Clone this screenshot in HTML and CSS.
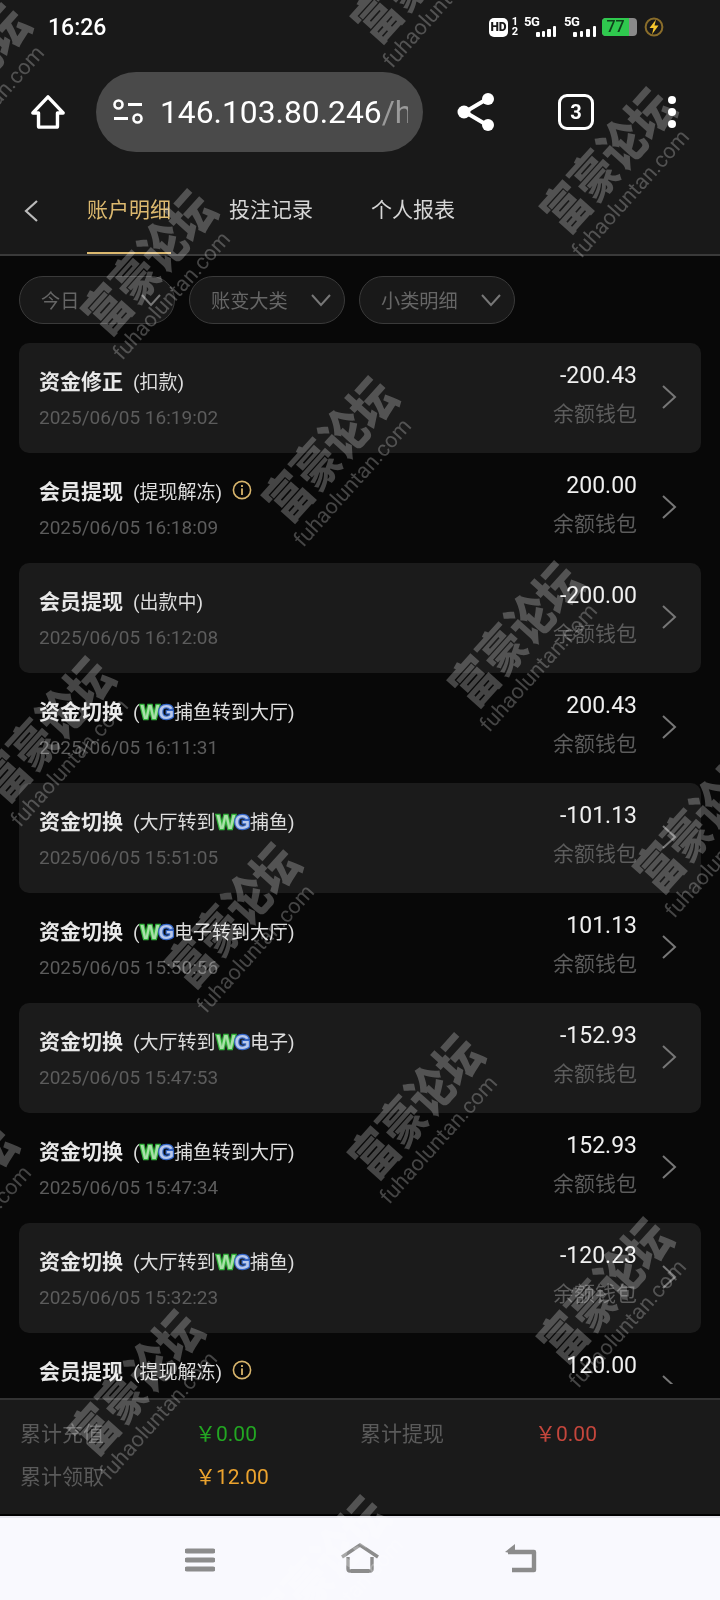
FILE: index.html
```html
<!DOCTYPE html>
<html lang="zh-CN">
<head>
  <meta charset="UTF-8">
  <meta name="viewport" content="width=device-width, initial-scale=1.0">
  <title>账户明细</title>
  <link rel="stylesheet" href="styles.css">
</head>
<body>
  <svg class="sprite" width="0" height="0">
    <symbol id="chev-right" viewBox="0 0 16 26"><path d="M2 2l12 11L2 24" fill="none" stroke="#777" stroke-width="2"/></symbol>
    <symbol id="chev-down" viewBox="0 0 22 14"><path d="M2 2l9 10 9-10" fill="none" stroke="#777" stroke-width="2"/></symbol>
    <symbol id="info" viewBox="0 0 20 20"><circle cx="10" cy="10" r="8.6" fill="none" stroke="#d8b56c" stroke-width="1.6"/><rect x="9.1" y="8.4" width="1.8" height="6.6" fill="#d8b56c"/><rect x="9.1" y="5" width="1.8" height="2" fill="#d8b56c"/></symbol>
  </svg>

  <div class="page">
    <header class="top">
      <div class="status">
        <span class="time">16:26</span>
        <div class="status-icons">
          <span class="hd">HD</span>
          <span class="sim"><i>1</i><i>2</i></span>
          <div class="net">
            <span class="net-label">5G</span>
            <span class="bars"><b class="b1"></b><b class="b2"></b><b class="b3"></b><b class="b4"></b></span>
          </div>
          <div class="net net-second">
            <span class="net-label">5G</span>
            <span class="bars"><b class="b1"></b><b class="b2"></b><b class="b3"></b><b class="b4"></b></span>
          </div>
          <div class="battery"><span class="battery-fill">77</span></div>
          <svg class="bolt" viewBox="0 0 20 20"><circle cx="10" cy="10" r="8.4" fill="none" stroke="#8a6d2a" stroke-width="2"/><path d="M12 2.5L5.5 11H9.5L8 17.5 14.5 8.5H10.5z" fill="#f4c52e"/></svg>
        </div>
      </div>

      <div class="browser">
        <svg class="home-icon" viewBox="0 0 38 38"><path d="M19 3L3 20h6v14a1 1 0 0 0 1 1h18a1 1 0 0 0 1-1V20h6z" fill="none" stroke="#fff" stroke-width="3.6" stroke-linejoin="round"/></svg>
        <div class="url">
          <svg class="url-icon" viewBox="0 0 30 26"><circle cx="5.5" cy="5.5" r="4" fill="none" stroke="#fff" stroke-width="2.6"/><path d="M15 5.5h14M1 19.5h14" stroke="#fff" stroke-width="2.8"/><circle cx="24.5" cy="19.5" r="4" fill="none" stroke="#fff" stroke-width="2.6"/></svg>
          <span class="url-text">146.103.80.246<em>/h</em></span>
        </div>
        <svg class="share-icon" viewBox="0 0 38 40"><path d="M30 7L8 20l22 13" fill="none" stroke="#fff" stroke-width="4"/><circle cx="31" cy="7" r="6" fill="#fff"/><circle cx="7" cy="20" r="6.5" fill="#fff"/><circle cx="31" cy="33" r="6" fill="#fff"/></svg>
        <span class="tab-count">3</span>
        <div class="dots"><i></i><i></i><i></i></div>
      </div>

      <nav class="tabs">
        <svg class="back" viewBox="0 0 16 24"><path d="M14 2L3 12l11 10" fill="none" stroke="#bbb" stroke-width="2.2"/></svg>
        <a class="tab active">账户明细</a>
        <a class="tab">投注记录</a>
        <a class="tab">个人报表</a>
      </nav>
    </header>

    <div class="filters">
      <div class="pill">今日<svg class="pill-arrow"><use href="#chev-down"/></svg></div>
      <div class="pill">账变大类<svg class="pill-arrow"><use href="#chev-down"/></svg></div>
      <div class="pill">小类明细<svg class="pill-arrow"><use href="#chev-down"/></svg></div>
    </div>

    <main class="list">
      <div class="row card">
        <div class="row-main">
          <div class="row-title"><strong>资金修正</strong><span>(扣款)</span></div>
          <div class="row-date">2025/06/05 16:19:02</div>
        </div>
        <div class="row-money"><div class="amount">-200.43</div><div class="wallet">余额钱包</div></div>
        <svg class="arrow"><use href="#chev-right"/></svg>
      </div>
      <div class="row">
        <div class="row-main">
          <div class="row-title"><strong>会员提现</strong><span>(提现解冻)</span><svg class="info"><use href="#info"/></svg></div>
          <div class="row-date">2025/06/05 16:18:09</div>
        </div>
        <div class="row-money"><div class="amount">200.00</div><div class="wallet">余额钱包</div></div>
        <svg class="arrow"><use href="#chev-right"/></svg>
      </div>
      <div class="row card">
        <div class="row-main">
          <div class="row-title"><strong>会员提现</strong><span>(出款中)</span></div>
          <div class="row-date">2025/06/05 16:12:08</div>
        </div>
        <div class="row-money"><div class="amount">-200.00</div><div class="wallet">余额钱包</div></div>
        <svg class="arrow"><use href="#chev-right"/></svg>
      </div>
      <div class="row">
        <div class="row-main">
          <div class="row-title"><strong>资金切换</strong><span>(<span class="wg"><u>W</u><s>G</s></span>捕鱼转到大厅)</span></div>
          <div class="row-date">2025/06/05 16:11:31</div>
        </div>
        <div class="row-money"><div class="amount">200.43</div><div class="wallet">余额钱包</div></div>
        <svg class="arrow"><use href="#chev-right"/></svg>
      </div>
      <div class="row card">
        <div class="row-main">
          <div class="row-title"><strong>资金切换</strong><span>(大厅转到<span class="wg"><u>W</u><s>G</s></span>捕鱼)</span></div>
          <div class="row-date">2025/06/05 15:51:05</div>
        </div>
        <div class="row-money"><div class="amount">-101.13</div><div class="wallet">余额钱包</div></div>
        <svg class="arrow"><use href="#chev-right"/></svg>
      </div>
      <div class="row">
        <div class="row-main">
          <div class="row-title"><strong>资金切换</strong><span>(<span class="wg"><u>W</u><s>G</s></span>电子转到大厅)</span></div>
          <div class="row-date">2025/06/05 15:50:56</div>
        </div>
        <div class="row-money"><div class="amount">101.13</div><div class="wallet">余额钱包</div></div>
        <svg class="arrow"><use href="#chev-right"/></svg>
      </div>
      <div class="row card">
        <div class="row-main">
          <div class="row-title"><strong>资金切换</strong><span>(大厅转到<span class="wg"><u>W</u><s>G</s></span>电子)</span></div>
          <div class="row-date">2025/06/05 15:47:53</div>
        </div>
        <div class="row-money"><div class="amount">-152.93</div><div class="wallet">余额钱包</div></div>
        <svg class="arrow"><use href="#chev-right"/></svg>
      </div>
      <div class="row">
        <div class="row-main">
          <div class="row-title"><strong>资金切换</strong><span>(<span class="wg"><u>W</u><s>G</s></span>捕鱼转到大厅)</span></div>
          <div class="row-date">2025/06/05 15:47:34</div>
        </div>
        <div class="row-money"><div class="amount">152.93</div><div class="wallet">余额钱包</div></div>
        <svg class="arrow"><use href="#chev-right"/></svg>
      </div>
      <div class="row card">
        <div class="row-main">
          <div class="row-title"><strong>资金切换</strong><span>(大厅转到<span class="wg"><u>W</u><s>G</s></span>捕鱼)</span></div>
          <div class="row-date">2025/06/05 15:32:23</div>
        </div>
        <div class="row-money"><div class="amount">-120.23</div><div class="wallet">余额钱包</div></div>
        <svg class="arrow"><use href="#chev-right"/></svg>
      </div>
      <div class="row">
        <div class="row-main">
          <div class="row-title"><strong>会员提现</strong><span>(提现解冻)</span><svg class="info"><use href="#info"/></svg></div>
        </div>
        <div class="row-money"><div class="amount">120.00</div></div>
        <svg class="arrow"><use href="#chev-right"/></svg>
      </div>
    </main>

    <footer class="totals">
      <div class="total"><span class="total-label">累计充值</span><span class="total-value green">￥0.00</span></div>
      <div class="total"><span class="total-label">累计提现</span><span class="total-value red">￥0.00</span></div>
      <div class="total"><span class="total-label">累计领取</span><span class="total-value orange">￥12.00</span></div>
    </footer>

    <div class="navbar">
      <svg class="nav-icon" viewBox="0 0 30 24"><path d="M2 3h26M2 12h26M2 21h26" stroke="#8c8c8c" stroke-width="5" stroke-linecap="round"/></svg>
      <svg class="nav-icon nav-home" viewBox="0 0 40 30"><path d="M2 14L20 2l18 12" fill="none" stroke="#8c8c8c" stroke-width="3.4"/><path d="M8 14v12a2 2 0 0 0 2 2h20a2 2 0 0 0 2-2V14" fill="none" stroke="#8c8c8c" stroke-width="3.4"/><path d="M11 28h18" stroke="#8c8c8c" stroke-width="4"/></svg>
      <svg class="nav-icon nav-back" viewBox="0 0 34 30"><path d="M4 9h26v18H8" fill="none" stroke="#8c8c8c" stroke-width="4.4" stroke-linejoin="round"/><path d="M1 9l10-8v10z" fill="#8c8c8c"/></svg>
    </div>

    <div class="marks">
      <div class="mark m1"><b>富豪论坛</b><span>fuhaoluntan.com</span></div>
      <div class="mark m2"><b>富豪论坛</b><span>fuhaoluntan.com</span></div>
      <div class="mark m3"><b>富豪论坛</b><span>fuhaoluntan.com</span></div>
      <div class="mark m4"><b>富豪论坛</b><span>fuhaoluntan.com</span></div>
      <div class="mark m5"><b>富豪论坛</b><span>fuhaoluntan.com</span></div>
      <div class="mark m6"><b>富豪论坛</b><span>fuhaoluntan.com</span></div>
      <div class="mark m7"><b>富豪论坛</b><span>fuhaoluntan.com</span></div>
      <div class="mark m8"><b>富豪论坛</b><span>fuhaoluntan.com</span></div>
      <div class="mark m9"><b>富豪论坛</b><span>fuhaoluntan.com</span></div>
      <div class="mark m10"><b>富豪论坛</b><span>fuhaoluntan.com</span></div>
      <div class="mark m11"><b>富豪论坛</b><span>fuhaoluntan.com</span></div>
      <div class="mark m12"><b>富豪论坛</b><span>fuhaoluntan.com</span></div>
      <div class="mark m13"><b>富豪论坛</b><span>fuhaoluntan.com</span></div>
      <div class="mark m14"><b>富豪论坛</b><span>fuhaoluntan.com</span></div>
    </div>
  </div>
</body>
</html>
```

FILE: styles.css
```css
* {
  box-sizing: border-box;
}

body {
  margin: 0;
  background-color: #080808;
  font-family: Roboto, "Noto Sans CJK SC", sans-serif;
}

.sprite {
  position: absolute;
}

.page {
  position: relative;
  width: 720px;
  height: 1600px;
  display: flex;
  flex-direction: column;
  overflow: hidden;
  background-color: #080808;
}

/* top area */
.top {
  height: 256px;
  flex: none;
  background-color: #191919;
  border-bottom: 2px solid #3a3a3a;
}

.status {
  height: 56px;
  display: flex;
  align-items: center;
  justify-content: space-between;
  padding: 0 56px 2px 48px;
}

.time {
  color: #fff;
  font-size: 23px;
  font-weight: 500;
}

.status-icons {
  display: flex;
  align-items: center;
  color: #fff;
}

.hd {
  width: 19px;
  height: 19px;
  border-radius: 5px;
  background-color: #fff;
  color: #191919;
  font-size: 12px;
  font-weight: 900;
  line-height: 19px;
  text-align: center;
}

.sim {
  width: 14px;
  display: flex;
  flex-direction: column;
  align-items: center;
  font-size: 11px;
  font-weight: 700;
  line-height: 10px;
}

.sim i {
  font-style: normal;
}

.net {
  width: 32px;
  height: 20px;
  margin-left: 2px;
  position: relative;
}

.net-second {
  margin-left: 8px;
}

.net-label {
  position: absolute;
  left: 0;
  top: -3px;
  font-size: 13px;
  font-weight: 700;
  letter-spacing: -0.5px;
}

.bars {
  position: absolute;
  right: 0;
  bottom: 0;
  display: flex;
  align-items: flex-end;
  gap: 2px;
}

.net-second .bars {
  gap: 3px;
}

.bars b {
  width: 3.5px;
  background-color: #fff;
  border-radius: 1px;
}

.b1 { height: 5px; }
.b2 { height: 6px; }
.b3 { height: 8px; }
.b4 { height: 11px; }

.battery {
  width: 35px;
  height: 18px;
  margin-left: 6px;
  background-color: #8a8a8a;
  border-radius: 4px;
  overflow: hidden;
}

.battery-fill {
  display: block;
  width: 27px;
  height: 18px;
  background-color: #2fc94e;
  color: #10401c;
  font-size: 16px;
  font-weight: 500;
  line-height: 18px;
  text-align: center;
}

.bolt {
  width: 20px;
  height: 20px;
  margin-left: 7px;
}

/* browser bar */
.browser {
  height: 80px;
  margin-top: 16px;
  display: flex;
  align-items: center;
  padding-left: 30px;
}

.home-icon {
  width: 36px;
  height: 38px;
  flex: none;
}

.url {
  width: 327px;
  height: 80px;
  margin-left: 30px;
  flex: none;
  display: flex;
  align-items: center;
  padding: 0 15px 0 17px;
  background-color: #4a4a4a;
  border-radius: 40px;
  overflow: hidden;
}

.url-icon {
  width: 30px;
  height: 26px;
  flex: none;
}

.url-text {
  margin-left: 17px;
  color: #fff;
  font-size: 31.8px;
  white-space: nowrap;
  overflow: hidden;
}

.url-text em {
  font-style: normal;
  color: #9a9a9a;
}

.share-icon {
  width: 38px;
  height: 40px;
  margin-left: 34px;
  flex: none;
}

.tab-count {
  width: 36px;
  height: 36px;
  margin-left: 63px;
  flex: none;
  border: 3px solid #fff;
  border-radius: 9px;
  color: #fff;
  font-size: 20px;
  font-weight: 700;
  line-height: 30px;
  text-align: center;
}

.dots {
  margin-left: 74px;
  display: flex;
  flex-direction: column;
  gap: 4px;
}

.dots i {
  width: 8px;
  height: 8px;
  border-radius: 50%;
  background-color: #fff;
}

/* tabs */
.tabs {
  height: 102px;
  padding-top: 28px;
  display: flex;
  align-items: flex-start;
  position: relative;
  padding-left: 87px;
}

.back {
  position: absolute;
  left: 23px;
  top: 47px;
  width: 16px;
  height: 24px;
}

.tab {
  width: 84px;
  height: 74px;
  margin-right: 58px;
  color: #d6d6d6;
  font-size: 21px;
  line-height: 60px;
  white-space: nowrap;
}

.tab.active {
  color: #dcb96f;
  border-bottom: 2px solid #dcb96f;
}

/* filters */
.filters {
  height: 87px;
  flex: none;
  display: flex;
  gap: 14px;
  padding: 20px 0 0 19px;
}

.pill {
  width: 156px;
  height: 48px;
  display: flex;
  align-items: center;
  justify-content: space-between;
  padding: 0 12px 0 21px;
  background-color: #191919;
  border: 1.5px solid #3a3a3a;
  border-radius: 24px;
  color: #666;
  font-size: 19.2px;
}

.pill-arrow {
  width: 22px;
  height: 14px;
}

/* list */
.list {
  flex: none;
  height: 1041px;
  overflow: hidden;
  padding: 0 19px;
}

.row {
  height: 110px;
  display: flex;
  border-radius: 10px;
}

.row.card {
  background-color: #1b1b1b;
}

.row-main {
  flex: 1;
  padding: 23px 0 0 20px;
}

.row-title {
  height: 28px;
  display: flex;
  align-items: center;
  color: #ddd;
  font-size: 19px;
  white-space: nowrap;
}

.row-title strong {
  margin-right: 10px;
  color: #e8e8e8;
  font-size: 21px;
  font-weight: 700;
}

.row-date {
  margin-top: 11px;
  color: #5c5c5c;
  font-size: 19px;
  line-height: 26px;
}

.row-money {
  padding-top: 19px;
  text-align: right;
}

.amount {
  color: #f0f0f0;
  font-size: 23px;
  line-height: 28px;
}

.wallet {
  margin-top: 10px;
  color: #5c5c5c;
  font-size: 21px;
  line-height: 28px;
}

.arrow {
  width: 16px;
  height: 26px;
  margin: 41px 24px 0 24px;
}

.info {
  width: 20px;
  height: 20px;
  margin-left: 10px;
}

/* small WG logo */
.wg {
  display: inline-block;
  font-family: "Liberation Sans", sans-serif;
  font-size: 20px;
  font-weight: 700;
  line-height: 20px;
  letter-spacing: -1px;
  margin: 0 1px;
}

.wg u {
  text-decoration: none;
  color: #a9e0a9;
  -webkit-text-stroke: 2.5px #33b33c;
  paint-order: stroke fill;
}

.wg s {
  text-decoration: none;
  color: #b9c8ea;
  -webkit-text-stroke: 2.5px #3465c4;
  paint-order: stroke fill;
}

/* totals */
.totals {
  height: 118px;
  margin-top: 14px;
  flex: none;
  display: grid;
  grid-template-columns: 340px 340px;
  align-content: start;
  row-gap: 13px;
  padding: 17px 0 0 20px;
  background-color: #1a1a1a;
  border-top: 2px solid #333;
  border-bottom: 2px solid #000;
}

.total {
  display: flex;
  align-items: center;
  height: 30px;
  font-size: 21px;
}

.total-label {
  width: 175px;
  color: #5a5a5a;
}

.total-value {
  font-size: 21px;
}

.green { color: #22a622; }
.red { color: #c4463c; }
.orange { color: #eba32e; }

/* system nav */
.navbar {
  flex: 1;
  display: flex;
  padding: 25px 0 0 185px;
  align-items: flex-start;
  background-color: #f9f9fe;
  border-top: 2px solid #e6e6ee;
}

.nav-icon {
  width: 30px;
  height: 24px;
  margin-top: 5px;
  flex: none;
}

.nav-home {
  width: 40px;
  height: 30px;
  margin: 0 0 0 125px;
}

.nav-back {
  width: 34px;
  height: 30px;
  margin: 0 0 0 124px;
}

/* watermark over the whole picture */
.marks {
  position: absolute;
  inset: 0;
  overflow: hidden;
  pointer-events: none;
  mix-blend-mode: screen;
}

.mark {
  position: absolute;
  display: flex;
  flex-direction: column;
  align-items: center;
  width: 240px;
  transform: translate(-50%, -50%) rotate(-48deg);
  color: #3f3f3f;
}

.mark b {
  display: inline-block;
  font-size: 42px;
  font-weight: 900;
  line-height: 50px;
  white-space: nowrap;
  transform: scaleY(1.22);
}

.mark span {
  margin-left: -20px;
  margin-top: -1px;
  font-size: 21.6px;
  line-height: 26px;
  white-space: nowrap;
}

.m1 { left: -26px; top: 86px; }
.m2 { left: 430px; top: -20px; }
.m3 { left: 619px; top: 170px; }
.m4 { left: 160px; top: 272px; }
.m5 { left: 341px; top: 459px; }
.m6 { left: 527px; top: 644px; }
.m7 { left: 712px; top: 830px; }
.m8 { left: 58px; top: 739px; }
.m9 { left: 244px; top: 925px; }
.m10 { left: 427px; top: 1116px; }
.m11 { left: 616px; top: 1300px; }
.m12 { left: -39px; top: 1206px; }
.m13 { left: 147px; top: 1392px; }
.m14 { left: 333px; top: 1578px; }
```
